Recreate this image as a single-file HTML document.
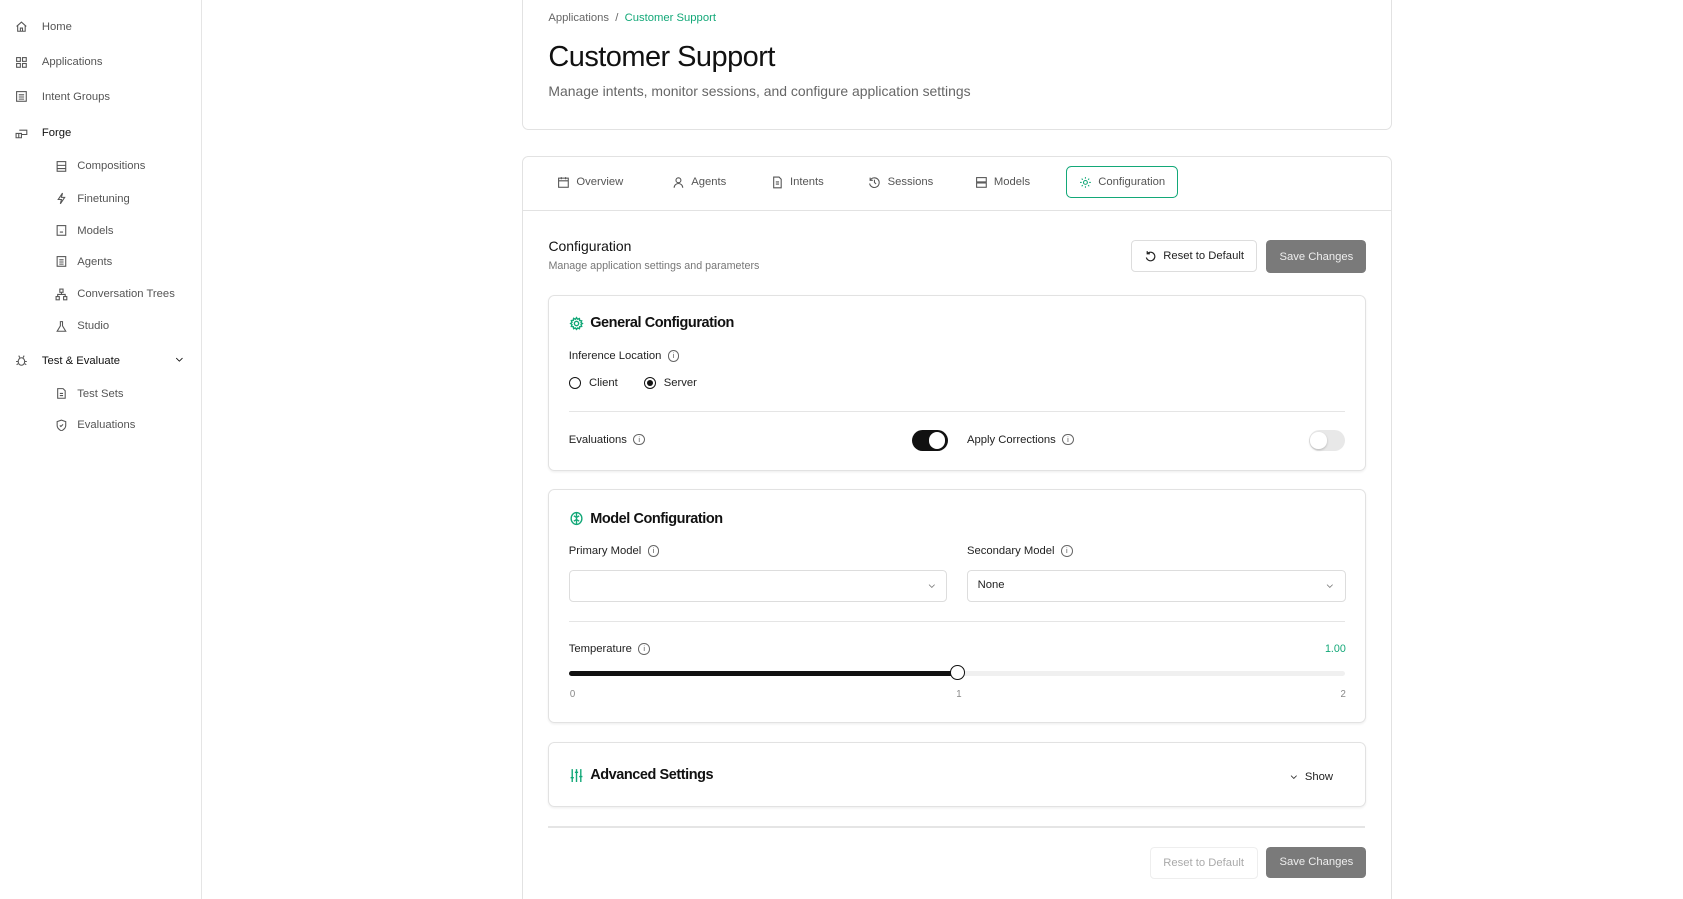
<!DOCTYPE html>
<html><head><meta charset="utf-8"><style>
html,body{margin:0;padding:0;background:#fff;overflow:hidden}
body{width:1683px;height:899px}
#r{zoom:1.0733;width:1568px;height:838px;position:relative;font-family:"Liberation Sans",sans-serif;color:#111;font-size:10.5px}
.a{position:absolute}
.side{left:0;top:0;width:187px;height:838px;border-right:1px solid #e5e5e5}
.ni{position:absolute;display:flex;align-items:center;color:#555;font-size:10.5px}
.ni svg{width:12px;height:12px;margin-right:13px;stroke:#555;fill:none;stroke-width:1}
.card{border:1px solid #e2e2e2;border-radius:6px;background:#fff}
.g{color:#13a878}
.tab{position:absolute;top:155px;height:30px;display:flex;align-items:center;color:#555;font-size:10.5px}
.tab svg{width:12px;height:12px;margin-right:6px;stroke:#555;fill:none;stroke-width:1}
.btn{position:absolute;display:flex;align-items:center;justify-content:center;border-radius:4px;font-size:10.5px}
.info{display:inline-block;width:9px;height:9px;border:1px solid #666;border-radius:50%;font-size:7px;line-height:9px;text-align:center;margin-left:6px;color:#555;vertical-align:middle}
.lbl{font-size:10.5px;color:#222}
.h{font-size:13.5px;font-weight:bold;letter-spacing:-.4px;display:flex;align-items:center}
.h svg{width:14px;height:14px;margin-right:6px;stroke:#13a878;fill:none;stroke-width:1.3}
</style></head><body><div id="r">
<div class="a side">
 <div class="ni" style="left:14px;top:19px"><svg viewBox="0 0 12 12"><path d="M1.5 6L6 2l4.5 4M2.5 5.3V10.5h7V5.3M5 10.5V7.5h2v3"/></svg>Home</div>
 <div class="ni" style="left:14px;top:52px"><svg viewBox="0 0 12 12"><rect x="1.5" y="1.5" width="3.5" height="3.5"/><rect x="7" y="1.5" width="3.5" height="3.5"/><rect x="1.5" y="7" width="3.5" height="3.5"/><rect x="7" y="7" width="3.5" height="3.5"/></svg>Applications</div>
 <div class="ni" style="left:14px;top:84px"><svg viewBox="0 0 12 12"><rect x="1.5" y="1.5" width="9" height="9"/><path d="M3.5 4.5h5M3.5 6.5h5M3.5 8.5h5"/></svg>Intent Groups</div>
 <div class="ni" style="left:14px;top:118px;color:#111"><svg viewBox="0 0 12 12"><path d="M1 6h5v4H1zM4 3h7v4H6M3.5 6v4"/></svg>Forge</div>
 <div class="ni" style="left:51px;top:149px"><svg viewBox="0 0 12 12" style="margin-right:9px"><rect x="2" y="1.5" width="8" height="9"/><path d="M2 5h8M2 8h8"/></svg>Compositions</div>
 <div class="ni" style="left:51px;top:179px"><svg viewBox="0 0 12 12" style="margin-right:9px"><path d="M7 1L3 7h3l-1 4 4-6H6z"/></svg>Finetuning</div>
 <div class="ni" style="left:51px;top:209px"><svg viewBox="0 0 12 12" style="margin-right:9px"><rect x="2" y="1.5" width="8" height="9"/><path d="M4.5 5h.1M7.5 5h.1M4.5 7.5h3"/></svg>Models</div>
 <div class="ni" style="left:51px;top:238px"><svg viewBox="0 0 12 12" style="margin-right:9px"><rect x="2" y="1.5" width="8" height="9"/><path d="M4 4.5h4M4 6.5h4M4 8.5h4"/></svg>Agents</div>
 <div class="ni" style="left:51px;top:268px"><svg viewBox="0 0 12 12" style="margin-right:9px"><rect x="4.5" y="1" width="3" height="3"/><rect x="1" y="8" width="3" height="3"/><rect x="8" y="8" width="3" height="3"/><path d="M6 4v2M2.5 8V6h7v2"/></svg>Conversation Trees</div>
 <div class="ni" style="left:51px;top:298px"><svg viewBox="0 0 12 12" style="margin-right:9px"><path d="M4.5 1.5h3M5 1.5v4l-3 5h8l-3-5v-4"/></svg>Studio</div>
 <div class="ni" style="left:14px;top:330px;color:#111;width:160px"><svg viewBox="0 0 12 12"><ellipse cx="6" cy="7" rx="3" ry="3.5"/><path d="M4.5 3.5l-1-2M7.5 3.5l1-2M1 7h2M9 7h2M1.5 10l1.5-1M10.5 10L9 9"/></svg>Test &amp; Evaluate<svg viewBox="0 0 12 12" style="position:absolute;right:2px;top:0;width:10px;height:10px;margin:0;stroke:#111"><path d="M2.5 4.5L6 8l3.5-3.5"/></svg></div>
 <div class="ni" style="left:51px;top:361px"><svg viewBox="0 0 12 12" style="margin-right:9px"><path d="M2.5 1.5h5l2 2v7h-7zM4.5 6h3M4.5 8h3"/></svg>Test Sets</div>
 <div class="ni" style="left:51px;top:390px"><svg viewBox="0 0 12 12" style="margin-right:9px"><path d="M6 1l4 1.5V6c0 2.5-2 4-4 5-2-1-4-2.5-4-5V2.5z"/><path d="M4.5 6l1 1 2-2"/></svg>Evaluations</div>
</div>

<div class="a card" style="left:486px;top:-6px;width:809px;height:125px">
 <div class="a" style="left:24px;top:16px;color:#666;font-size:10.5px">Applications &nbsp;/&nbsp; <span class="g">Customer Support</span></div>
 <div class="a" style="left:24px;top:43px;font-size:27px;letter-spacing:-.5px">Customer Support</div>
 <div class="a" style="left:24px;top:82px;font-size:13px;color:#666">Manage intents, monitor sessions, and configure application settings</div>
</div>

<div class="a card" style="left:486px;top:145px;width:809px;height:720px"></div>
<div class="a" style="left:487px;top:196px;width:809px;height:1px;background:#e2e2e2"></div>
<div class="tab" style="left:519px"><svg viewBox="0 0 12 12"><rect x="1.5" y="2" width="9" height="8.5"/><path d="M1.5 4.5h9M4 1v2M8 1v2"/></svg>Overview</div>
<div class="tab" style="left:626px"><svg viewBox="0 0 12 12"><circle cx="6" cy="4" r="2.3"/><path d="M2 11c0-2.5 2-4 4-4s4 1.5 4 4"/></svg>Agents</div>
<div class="tab" style="left:718px"><svg viewBox="0 0 12 12"><path d="M2.5 1h5l2 2v8h-7zM4.5 5.5h3M4.5 7.5h3"/></svg>Intents</div>
<div class="tab" style="left:809px"><svg viewBox="0 0 12 12"><path d="M2 4a4.5 4.5 0 1 1-.5 3M2 1.5V4h2.5M6 3.5V6l1.5 1.5"/></svg>Sessions</div>
<div class="tab" style="left:908px"><svg viewBox="0 0 12 12"><rect x="1.5" y="1.5" width="9" height="4"/><rect x="1.5" y="6.5" width="9" height="4"/></svg>Models</div>
<div class="tab g" style="left:993px;width:103px;height:28px;border:1px solid #13a878;border-radius:5px;justify-content:center;top:155px"><svg viewBox="0 0 12 12" style="stroke:#13a878"><circle cx="6" cy="6" r="1.8"/><path d="M6 1v1.5M6 9.5V11M1 6h1.5M9.5 6H11M2.5 2.5l1 1M8.5 8.5l1 1M2.5 9.5l1-1M8.5 3.5l1-1"/></svg>Configuration</div>

<div class="a" style="left:511px;top:222px;font-size:13px">Configuration</div>
<div class="a" style="left:511px;top:242px;font-size:10px;color:#777">Manage application settings and parameters</div>
<div class="btn" style="left:1054px;top:224px;width:115px;height:28px;border:1px solid #ddd;color:#222"><svg viewBox="0 0 12 12" style="width:12px;height:12px;margin-right:6px;stroke:#222;fill:none;stroke-width:1.1"><path d="M3 3.5a4 4 0 1 1-.8 3.5M3 1v2.5h2.5"/></svg>Reset to Default</div>
<div class="btn" style="left:1180px;top:224px;width:93px;height:30px;background:#7a7a7a;color:#eee">Save Changes</div>

<div class="a card" style="left:511px;top:275px;width:760px;height:162px;box-shadow:0 1px 2px rgba(0,0,0,.06)">
 <div class="a h" style="left:18px;top:18px"><svg viewBox="0 0 14 14"><circle cx="7" cy="7" r="2"/><path d="M7 1.5l1 1.5 1.7-.6.3 1.8 1.8.3-.6 1.7L12.5 7l-1.3 1 .6 1.7-1.8.3-.3 1.8L8 11.2 7 12.5 6 11.2l-1.7.6-.3-1.8-1.8-.3.6-1.7L1.5 7l1.3-1-.6-1.7 1.8-.3.3-1.8L6 3z"/></svg>General Configuration</div>
 <div class="a lbl" style="left:18px;top:50px">Inference Location<span class="info">i</span></div>
 <div class="a lbl" style="left:18px;top:75px;display:flex;align-items:center"><span style="width:10px;height:10px;border:1.3px solid #111;border-radius:50%;margin-right:7px"></span>Client<span style="width:10px;height:10px;border:1.3px solid #111;border-radius:50%;margin:0 7px 0 24px;position:relative;display:inline-block"><span style="position:absolute;left:2px;top:2px;width:6px;height:6px;background:#111;border-radius:50%"></span></span>Server</div>
 <div class="a" style="left:18px;top:107px;width:723px;height:1px;background:#e5e5e5"></div>
 <div class="a lbl" style="left:18px;top:128px">Evaluations<span class="info">i</span></div>
 <div class="a" style="left:338px;top:125px;width:33px;height:19px;background:#111;border-radius:10px"><div class="a" style="right:2px;top:2px;width:15px;height:15px;background:#fff;border-radius:50%"></div></div>
 <div class="a lbl" style="left:389px;top:128px">Apply Corrections<span class="info">i</span></div>
 <div class="a" style="left:708px;top:125px;width:33px;height:19px;background:#e8e8e8;border-radius:10px"><div class="a" style="left:1px;top:2px;width:15px;height:15px;background:#fff;border-radius:50%;box-shadow:0 1px 2px rgba(0,0,0,.2)"></div></div>
</div>

<div class="a card" style="left:511px;top:456px;width:760px;height:216px;box-shadow:0 1px 2px rgba(0,0,0,.06)">
 <div class="a h" style="left:18px;top:19px"><svg viewBox="0 0 14 14"><ellipse cx="7" cy="7" rx="5" ry="5.5"/><path d="M7 1.5v11M4.5 4.5L7 6l2.5-1.5M4.5 9.5L7 8l2.5 1.5"/></svg>Model Configuration</div>
 <div class="a lbl" style="left:18px;top:51px">Primary Model<span class="info">i</span></div>
 <div class="a lbl" style="left:389px;top:51px">Secondary Model<span class="info">i</span></div>
 <div class="a" style="left:18px;top:74px;width:351px;height:28px;border:1px solid #ddd;border-radius:4px"><svg class="a" viewBox="0 0 12 12" style="right:9px;top:9px;width:9px;height:9px;stroke:#777;fill:none"><path d="M2.5 4.5L6 8l3.5-3.5"/></svg></div>
 <div class="a" style="left:389px;top:74px;width:351px;height:28px;border:1px solid #ddd;border-radius:4px"><span class="a lbl" style="left:9px;top:8px">None</span><svg class="a" viewBox="0 0 12 12" style="right:9px;top:9px;width:9px;height:9px;stroke:#777;fill:none"><path d="M2.5 4.5L6 8l3.5-3.5"/></svg></div>
 <div class="a" style="left:18px;top:122px;width:723px;height:1px;background:#e5e5e5"></div>
 <div class="a lbl" style="left:18px;top:142px">Temperature<span class="info">i</span></div>
 <div class="a g" style="right:18px;top:142px;font-size:10px">1.00</div>
 <div class="a" style="left:18px;top:168px;width:723px;height:5px;background:#f0f0f0;border-radius:3px"></div>
 <div class="a" style="left:18px;top:168px;width:362px;height:5px;background:#111;border-radius:3px"></div>
 <div class="a" style="left:373px;top:163px;width:12px;height:12px;background:#fff;border:1.5px solid #111;border-radius:50%"></div>
 <div class="a" style="left:19px;top:185px;font-size:9px;color:#888">0</div>
 <div class="a" style="left:379px;top:185px;font-size:9px;color:#888">1</div>
 <div class="a" style="left:737px;top:185px;font-size:9px;color:#888">2</div>
</div>

<div class="a card" style="left:511px;top:691px;width:760px;height:59px;box-shadow:0 1px 2px rgba(0,0,0,.06)">
 <div class="a h" style="left:18px;top:23px"><svg viewBox="0 0 14 14"><path d="M3 1v12M7 1v12M11 1v12M1.5 9h3M5.5 4h3M9.5 8h3"/></svg>Advanced Settings</div>
 <div class="a lbl" style="right:30px;top:26px;display:flex;align-items:center"><svg viewBox="0 0 12 12" style="width:9px;height:9px;stroke:#222;fill:none;margin-right:6px"><path d="M2.5 4.5L6 8l3.5-3.5"/></svg>Show</div>
</div>

<div class="a" style="left:511px;top:770px;width:761px;height:1px;background:#e5e5e5"></div>
<div class="btn" style="left:1071px;top:789px;width:99px;height:28px;border:1px solid #eee;color:#aaa">Reset to Default</div>
<div class="btn" style="left:1180px;top:789px;width:93px;height:29px;background:#7a7a7a;color:#eee">Save Changes</div>
</div></body></html>
